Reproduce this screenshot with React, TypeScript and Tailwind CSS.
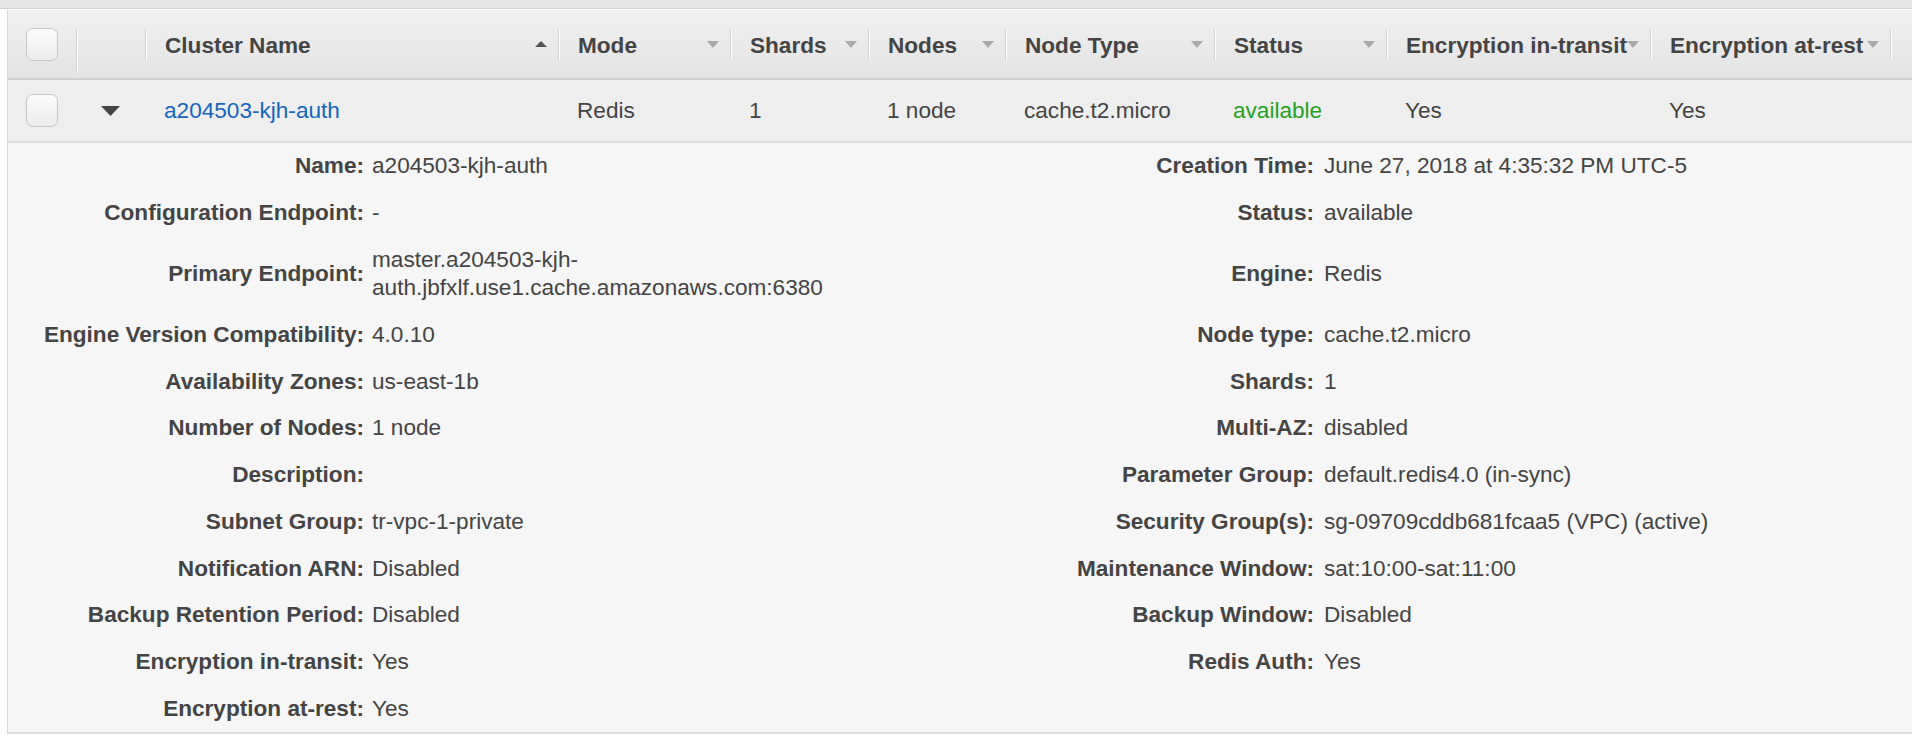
import React from "react";

// ---------------------------------------------------------------------------
// Column layout (pixel widths taken from the console table)
// ---------------------------------------------------------------------------

const COLUMNS = [
  { key: "name", label: "Cluster Name", width: "w-[413px]", sort: true },
  { key: "mode", label: "Mode", width: "w-[172px]" },
  { key: "shards", label: "Shards", width: "w-[138px]" },
  { key: "nodes", label: "Nodes", width: "w-[137px]" },
  { key: "nodeType", label: "Node Type", width: "w-[209px]" },
  { key: "status", label: "Status", width: "w-[172px]" },
  { key: "encTransit", label: "Encryption in-transit", width: "w-[264px]" },
  { key: "encRest", label: "Encryption at-rest", width: "w-[240px]" },
];

const LEFT_DETAILS: [string, string][] = [
  ["Name:", "a204503-kjh-auth"],
  ["Configuration Endpoint:", "-"],
  ["Primary Endpoint:", "master.a204503-kjh-auth.jbfxlf.use1.cache.amazonaws.com:6380"],
  ["Engine Version Compatibility:", "4.0.10"],
  ["Availability Zones:", "us-east-1b"],
  ["Number of Nodes:", "1 node"],
  ["Description:", ""],
  ["Subnet Group:", "tr-vpc-1-private"],
  ["Notification ARN:", "Disabled"],
  ["Backup Retention Period:", "Disabled"],
  ["Encryption in-transit:", "Yes"],
  ["Encryption at-rest:", "Yes"],
];

const RIGHT_DETAILS: [string, string][] = [
  ["Creation Time:", "June 27, 2018 at 4:35:32 PM UTC-5"],
  ["Status:", "available"],
  ["Engine:", "Redis"],
  ["Node type:", "cache.t2.micro"],
  ["Shards:", "1"],
  ["Multi-AZ:", "disabled"],
  ["Parameter Group:", "default.redis4.0 (in-sync)"],
  ["Security Group(s):", "sg-09709cddb681fcaa5 (VPC) (active)"],
  ["Maintenance Window:", "sat:10:00-sat:11:00"],
  ["Backup Window:", "Disabled"],
  ["Redis Auth:", "Yes"],
];

// ---------------------------------------------------------------------------
// Small pieces
// ---------------------------------------------------------------------------

function Checkbox() {
  return (
    <span className="block w-[32px] h-[33px] rounded-[7px] border border-[#c6c6c6] bg-linear-to-b from-[#fbfbfb] to-[#ececec]" />
  );
}

function Separator({ tall }: { tall?: boolean }) {
  return (
    <span
      className={`w-[2px] shrink-0 border-l border-[#d2d2d2] border-r border-r-white ${
        tall ? "self-start mt-[19px] h-[44px]" : "h-[31px]"
      }`}
    />
  );
}

function DownArrow() {
  return (
    <svg width="12" height="7" viewBox="0 0 12 7" className="shrink-0">
      <polygon points="0,0 12,0 6,7" fill="#a9a9a9" />
    </svg>
  );
}

function UpArrow() {
  return (
    <svg width="12" height="6" viewBox="0 0 12 6" className="shrink-0">
      <polygon points="0,6 12,6 6,0" fill="#555" />
    </svg>
  );
}

// ---------------------------------------------------------------------------
// Page
// ---------------------------------------------------------------------------

export default function App() {
  const row: Record<string, React.ReactNode> = {
    name: <span className="text-[#1565c0]">a204503-kjh-auth</span>,
    mode: "Redis",
    shards: "1",
    nodes: "1 node",
    nodeType: "cache.t2.micro",
    status: <span className="text-[#25a125]">available</span>,
    encTransit: "Yes",
    encRest: "Yes",
  };

  return (
    <div
      className="w-[1920px] h-[738px] bg-white text-[22.6px] text-[#444]"
      style={{ fontFamily: '"Liberation Sans", Arial, sans-serif' }}
    >
      <div className="w-[1912px]">
        {/* Top band */}
        <div className="h-[10px] bg-[#e6e6e6] border-b border-b-white">
          <div className="h-[9px] border-b border-[#d2d2d2]" />
        </div>

        <div className="ml-[7px] border-l border-[#dadada]">
          {/* Header */}
          <div className="flex items-center h-[70px] bg-linear-to-b from-[#f1f1f1] to-[#e3e3e3] border-b-2 border-[#d0d0d0] font-bold">
            <div className="w-[70px] h-full flex items-center">
              <div className="pl-[18px] flex-1">
                <Checkbox />
              </div>
              <Separator tall />
            </div>
            <div className="w-[69px] h-full flex items-center justify-end">
              <Separator />
            </div>
            {COLUMNS.map((c) => (
              <div key={c.key} className={`${c.width} h-full flex items-center`}>
                <span className="pl-[18px] pt-[3px] whitespace-nowrap">{c.label}</span>
                <span className="flex-1" />
                {c.sort ? <UpArrow /> : <DownArrow />}
                <span className="w-[11px] shrink-0" />
                <Separator />
              </div>
            ))}
          </div>

          {/* Cluster row */}
          <div className="flex items-center h-[63px] bg-[#eeeeee] border-b-2 border-[#dedede]">
            <div className="w-[70px] pl-[18px]">
              <Checkbox />
            </div>
            <div className="w-[69px] pl-[23px]">
              <svg width="19" height="10" viewBox="0 0 19 10" className="block">
                <polygon points="0,0 19,0 9.5,10" fill="#444" />
              </svg>
            </div>
            {COLUMNS.map((c) => (
              <div key={c.key} className={`${c.width} pl-[17px] whitespace-nowrap`}>
                {row[c.key]}
              </div>
            ))}
          </div>

          {/* Details */}
          <div className="bg-[#f6f6f6] border-b-2 border-[#dedede] grid grid-cols-[356px_596px_354px_1fr] items-center leading-[28px]">
            {LEFT_DETAILS.map(([label, value], i) => {
              const right = RIGHT_DETAILS[i];
              return (
                <React.Fragment key={label}>
                  <div className="py-[9.4px] text-right font-bold whitespace-nowrap">{label}</div>
                  <div className="py-[9.4px] pl-[8px] pr-[8px]">{value}</div>
                  <div className="py-[9.4px] text-right font-bold whitespace-nowrap">
                    {right ? right[0] : ""}
                  </div>
                  <div className="py-[9.4px] pl-[10px] whitespace-nowrap">{right ? right[1] : ""}</div>
                </React.Fragment>
              );
            })}
          </div>
        </div>
      </div>
    </div>
  );
}
